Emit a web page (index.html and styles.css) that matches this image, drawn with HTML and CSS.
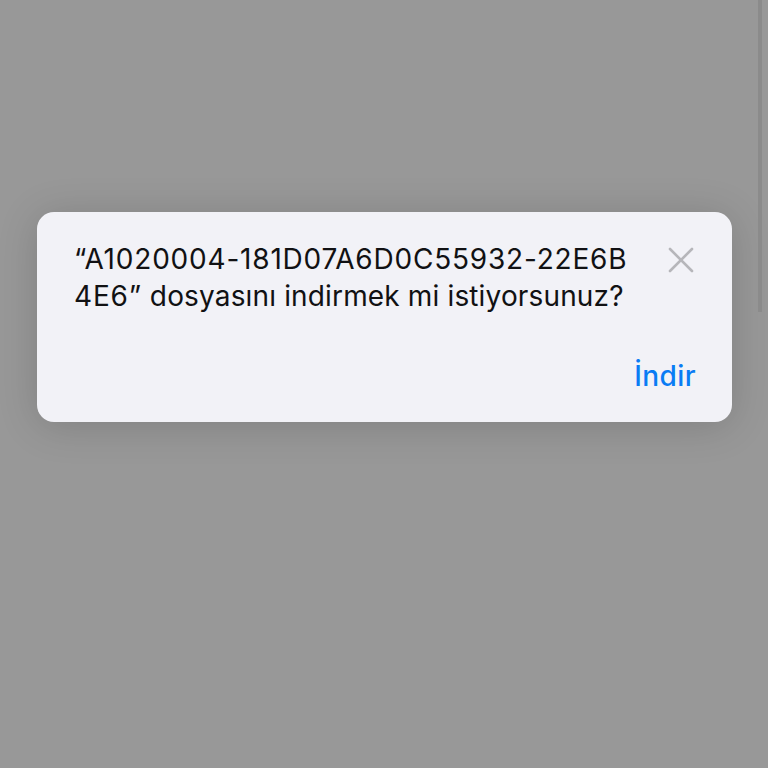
FILE: index.html
```html
<!DOCTYPE html>
<html lang="tr">
<head>
<meta charset="utf-8">
<title>İndir</title>
<link rel="stylesheet" href="styles.css">
</head>
<body>
<div class="screen">
  <div class="dialog">
    <div class="dialog-head">
      <p class="message"><span class="filename">“A1020004-181D07A6D0C55932-22E6B<br>4E6”</span> dosyasını indirmek mi istiyorsunuz?</p>
      <button class="close" aria-label="Kapat">
        <svg width="26" height="26" viewBox="0 0 26 26"><path d="M2 2 L24 24 M24 2 L2 24" stroke="#b6b6ba" stroke-width="2.6" stroke-linecap="round" fill="none"/></svg>
      </button>
    </div>
    <div class="dialog-actions">
      <button class="action">İndir</button>
    </div>
  </div>
  <div class="scroll-indicator"></div>
</div>
</body>
</html>
```
FILE: styles.css
```css
html, body {
  margin: 0;
  padding: 0;
  background: #989898;
}
.screen {
  position: relative;
  width: 768px;
  height: 768px;
  overflow: hidden;
  padding-top: 212px;
  box-sizing: border-box;
  font-family: "Inter", "Liberation Sans", sans-serif;
}
.dialog {
  margin-left: 37px;
  width: 695px;
  height: 210px;
  box-sizing: border-box;
  background: #f2f2f7;
  border-radius: 17px;
  padding: 29px 36px 0 37px;
  box-shadow: 0 4px 40px rgba(0, 0, 0, 0.16);
  display: flex;
  flex-direction: column;
}
.dialog-head {
  display: flex;
  align-items: flex-start;
  justify-content: space-between;
}
.message {
  margin: 0;
  font-size: 28px;
  line-height: 37px;
  color: #111113;
  font-weight: 400;
  letter-spacing: 0.15px;
  white-space: nowrap;
}
.filename {
  letter-spacing: 0.8px;
}
.close {
  margin: 6px 2px 0 0;
  padding: 0;
  border: 0;
  background: none;
  width: 26px;
  height: 26px;
  display: flex;
  flex: none;
}
.dialog-actions {
  display: flex;
  justify-content: flex-end;
  margin-top: 43px;
}
.action {
  border: 0;
  background: none;
  padding: 0;
  font-family: inherit;
  font-size: 28px;
  line-height: 37px;
  font-weight: 500;
  letter-spacing: 0.4px;
  color: #0a7cf4;
}
.scroll-indicator {
  position: absolute;
  top: 0;
  left: 758px;
  width: 4px;
  height: 312px;
  background: #8b8b8b;
}
```
